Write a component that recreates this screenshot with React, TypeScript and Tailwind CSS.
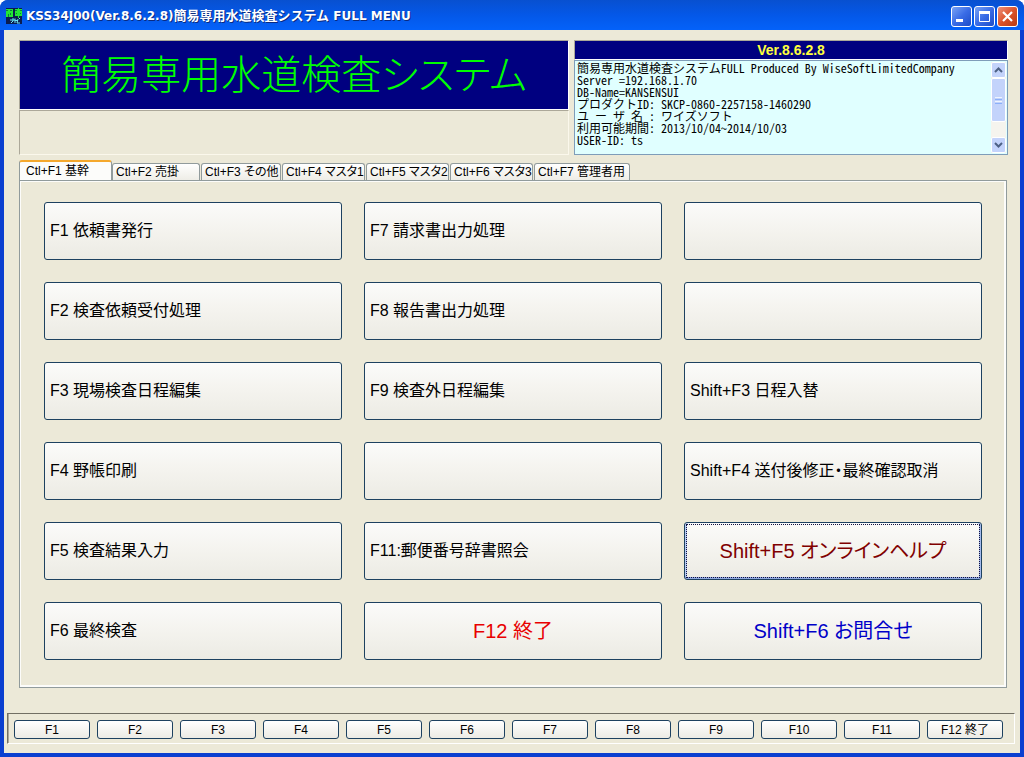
import { useState } from 'react';
import { clsx } from 'clsx';

const infoText = [
  '簡易専用水道検査システムFULL Produced By WiseSoftLimitedCompany',
  'Server =192.168.1.70',
  'DB-Name=KANSENSUI',
  'プロダクトID: SKCP-0860-2257158-1460290',
  'ユ ー ザ 名 : ワイズソフト',
  '利用可能期間: 2013/10/04～2014/10/03',
  'USER-ID: ts',
].join('\n');

const tabs = [
  { label: 'Ctl+F1 基幹', width: 'w-[93px]' },
  { label: 'Ctl+F2 売掛', width: 'w-[88px]' },
  { label: 'Ctl+F3 その他', width: 'w-20' },
  { label: 'Ctl+F4 マスタ1', width: 'w-[83px]' },
  { label: 'Ctl+F5 マスタ2', width: 'w-[83px]' },
  { label: 'Ctl+F6 マスタ3', width: 'w-[83px]' },
  { label: 'Ctl+F7 管理者用', width: 'w-24' },
];

type MenuItem = { label: string; tone?: 'red' | 'maroon' | 'blue'; focused?: boolean };

// row by row, three per row
const menu: MenuItem[] = [
  { label: 'F1 依頼書発行' },
  { label: 'F7 請求書出力処理' },
  { label: '' },
  { label: 'F2 検査依頼受付処理' },
  { label: 'F8 報告書出力処理' },
  { label: '' },
  { label: 'F3 現場検査日程編集' },
  { label: 'F9 検査外日程編集' },
  { label: 'Shift+F3 日程入替' },
  { label: 'F4 野帳印刷' },
  { label: '' },
  { label: 'Shift+F4 送付後修正・最終確認取消' },
  { label: 'F5 検査結果入力' },
  { label: 'F11:郵便番号辞書照会' },
  { label: 'Shift+F5 オンラインヘルプ', tone: 'maroon', focused: true },
  { label: 'F6 最終検査' },
  { label: 'F12 終了', tone: 'red' },
  { label: 'Shift+F6 お問合せ', tone: 'blue' },
];

const functionKeys = ['F1', 'F2', 'F3', 'F4', 'F5', 'F6', 'F7', 'F8', 'F9', 'F10', 'F11', 'F12 終了'];

const tones = {
  red: 'text-[#e80000]',
  maroon: 'text-[#800000]',
  blue: 'text-[#0000c8]',
};

function AppIcon() {
  return (
    <svg viewBox="0 0 16 16" className="size-4 shrink-0" aria-hidden="true">
      <rect width="16" height="16" fill="#0a1c50" />
      <path d="M0 1h7v8H0zM9 1h7v7H9zM12 0h1v10h-1z" fill="#22e634" />
      <path d="M0 2h2v1H0zM4 2h2v1H4zM2 6h1v3H2zM4 5h1v2H4zM9 2h2v1H9zM14 2h2v1h-2zM10 5h1v1h-1zM14 5h1v1h-1z" fill="#0c7a3c" />
      <path
        d="M4 12h5M7 10v3l-2 2M9 10.500v4.500M9 12.500h3M12 11l-1 4h3M13 10l1 1"
        fill="none"
        stroke="#6be4f5"
      />
    </svg>
  );
}

function CaptionButton({ kind }: { kind: 'minimize' | 'maximize' | 'close' }) {
  return (
    <button
      type="button"
      aria-label={kind}
      className={clsx(
        'flex size-[21px] items-center justify-center rounded-[3px] border border-white',
        kind === 'close'
          ? 'bg-linear-to-br from-[#ec9078] via-[#dc5229] to-[#b83a10]'
          : 'bg-linear-to-br from-[#7aa2f4] via-[#3a6ce6] to-[#1c4cc8]',
      )}
    >
      <svg viewBox="0 0 19 19" className="size-[19px]" fill="none" stroke="#fff" aria-hidden="true">
        {kind === 'minimize' && <path d="M4 13.500h7" strokeWidth="3" />}
        {kind === 'maximize' && (
          <>
            <path d="M4 5.500h11" strokeWidth="3" />
            <path d="M4.500 5v9.500h10V5" />
          </>
        )}
        {kind === 'close' && <path d="M5 5l9 9M14 5l-9 9" strokeWidth="2.200" />}
      </svg>
    </button>
  );
}

function ScrollArrow({ dir }: { dir: 'up' | 'down' }) {
  return (
    <button
      type="button"
      aria-label={dir}
      className="flex h-4 w-[15px] shrink-0 items-center justify-center rounded-[2px] border border-white bg-[#c3d3fb]"
    >
      <svg viewBox="0 0 9 6" className="h-[6px] w-[9px]" fill="none" stroke="#4d6185" strokeWidth="2" aria-hidden="true">
        <path d={dir === 'up' ? 'M1 5l3.500-3.500L8 5' : 'M1 1l3.500 3.500L8 1'} />
      </svg>
    </button>
  );
}

function MenuButton({ item }: { item: MenuItem }) {
  return (
    <button
      type="button"
      aria-label={item.label || '未使用'}
      className={clsx(
        "h-[58px] rounded-[3px] border border-[#1d4160] bg-linear-to-b from-[#fbfbfa] via-[#f4f3ee] to-[#ecebe4] [font-feature-settings:'palt']",
        item.focused ? 'p-0 shadow-[inset_0_-2px_0_#8fa8e0,inset_2px_0_0_#b8ccf4,inset_-2px_0_0_#a4baec]' : 'px-[5px]',
        item.tone ? ['text-center text-xl', tones[item.tone]] : 'text-left text-base text-black',
      )}
    >
      {item.focused ? (
        <span className="m-px flex h-[54px] items-center justify-center border border-dotted border-[#101040]">
          {item.label}
        </span>
      ) : (
        item.label
      )}
    </button>
  );
}

export default function App() {
  const [active, setActive] = useState(0);

  return (
    <div className="flex min-h-screen flex-col overflow-hidden rounded-t-lg bg-[#0a3fd0] font-['Liberation_Sans','Noto_Sans_CJK_JP',sans-serif] text-black">
      <header className="flex h-[30px] items-center gap-1 bg-linear-to-b from-[#0850d0] via-[#0458e8] to-[#0462fa] pt-[2px] pr-[6px] pl-[6px]">
        <AppIcon />
        <h1 className="flex-1 truncate font-['DejaVu_Sans','Noto_Sans_CJK_JP',sans-serif] text-xs leading-5 font-bold text-white [text-shadow:1px_1px_0_#0a2a80]">
          KSS34J00(Ver.8.6.2.8)
          <span className="text-[13px]">簡易専用水道検査システム</span> FULL MENU
        </h1>
        <div className="flex gap-[2px]">
          <CaptionButton kind="minimize" />
          <CaptionButton kind="maximize" />
          <CaptionButton kind="close" />
        </div>
      </header>

      <main className="mx-1 mb-1 flex flex-1 flex-col bg-[#ece9d8] pt-[10px]">
        <section className="mr-3 ml-[15px] flex gap-[5px]">
          <div className="flex flex-[550] flex-col">
            <h2 className="flex h-[70px] items-center justify-center border border-[#aca899] border-r-white border-b-white bg-[#000080] text-[40px] font-light whitespace-nowrap text-[#00ff00] [font-feature-settings:'palt']">
              簡易専用水道検査システム
            </h2>
            <div className="h-[45px] border border-[#aca899] border-r-[#fbf8ec] border-b-[#fbf8ec]" />
          </div>
          <div className="flex flex-[434] flex-col">
            <div className="flex h-5 items-center justify-center border border-[#aca899] border-r-white border-b-white bg-[#000080] text-sm font-bold text-[#ffff3c]">
              Ver.8.6.2.8
            </div>
            <div className="flex h-[95px] border border-[#7f9db9] bg-[#e0ffff]">
              <textarea
                readOnly
                aria-label="システム情報"
                value={infoText}
                className="min-w-0 flex-1 resize-none overflow-hidden pt-px pl-[2px] font-['Noto_Sans_CJK_JP',monospace] text-xs leading-3 whitespace-pre outline-none [font-feature-settings:'hwid']"
              />
              <div className="my-px mr-px flex w-[15px] flex-col bg-[#f5f4ee]">
                <ScrollArrow dir="up" />
                <div className="flex h-11 flex-col items-center justify-center gap-px rounded-[2px] border border-white bg-[#c3d3fb]">
                  <span className="h-px w-[7px] bg-[#eef4fe]" />
                  <span className="h-px w-[7px] bg-[#8cb0f8]" />
                  <span className="h-px w-[7px] bg-[#eef4fe]" />
                  <span className="h-px w-[7px] bg-[#8cb0f8]" />
                </div>
                <div className="flex-1" />
                <ScrollArrow dir="down" />
              </div>
            </div>
          </div>
        </section>

        <section className="mt-[5px] mr-[13px] ml-[15px]">
          <div role="tablist" className="flex items-end">
            {tabs.map((tab, i) => (
              <button
                key={tab.label}
                type="button"
                role="tab"
                aria-selected={i === active}
                onClick={() => setActive(i)}
                className={clsx(
                  "rounded-t-[3px] border text-left text-xs whitespace-nowrap [font-feature-settings:'palt']",
                  tab.width,
                  i === active
                    ? 'h-5 border-x-[#919b9c] border-t-2 border-t-[#f5a82c] border-b-0 bg-[#fcfcfa] pl-[6px]'
                    : 'h-[17px] border-[#919b9c] border-b-0 bg-linear-to-b from-white to-[#eeede6] pl-[3px]',
                  i > 1 && 'ml-px',
                )}
              >
                {tab.label}
              </button>
            ))}
          </div>
          <div
            role="tabpanel"
            className="grid grid-cols-3 gap-[22px] border border-[#919b9c] bg-[#ece9d8] px-6 pt-[21px] pb-[27px] shadow-[inset_1px_1px_0_#fcfcfa,inset_-2px_-2px_0_#fcfcfa]"
          >
            {menu.map((item, i) => (
              <MenuButton key={i} item={item} />
            ))}
          </div>
        </section>

        <footer className="mt-auto mr-[5px] mb-[9px] ml-[3px] grid grid-cols-12 gap-[7px] border border-[#716f64] border-r-white border-b-white pt-[6px] pr-[11px] pb-1 pl-[6px] shadow-[inset_1px_0_0_#aca899]">
          {functionKeys.map((key) => (
            <button
              key={key}
              type="button"
              className="h-[19px] rounded-[3px] border border-[#1d4160] bg-linear-to-b from-white to-[#ecebe4] text-xs leading-4 whitespace-nowrap"
            >
              {key}
            </button>
          ))}
        </footer>
      </main>
    </div>
  );
}
